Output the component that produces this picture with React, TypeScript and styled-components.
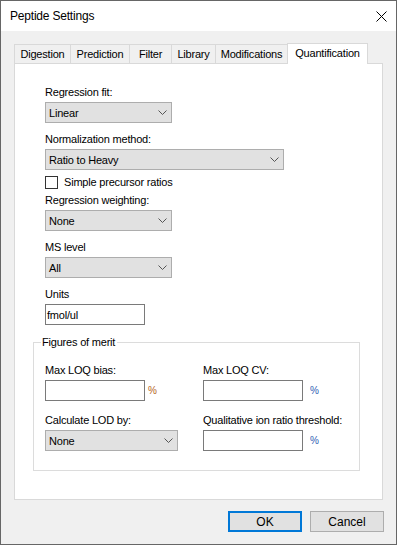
import React from "react";
import styled, { createGlobalStyle } from "styled-components";

const GlobalStyle = createGlobalStyle`
  html, body {
    margin: 0;
    padding: 0;
    background: #ffffff;
  }
  * {
    box-sizing: border-box;
  }
`;

const FONT = `"Liberation Sans", Arial, sans-serif`;

const tabs = [
  { name: "Digestion", width: 57 },
  { name: "Prediction", width: 60 },
  { name: "Filter", width: 43 },
  { name: "Library", width: 45 },
  { name: "Modifications", width: 73 },
  { name: "Quantification", width: 81 },
];

const ACTIVE_TAB = "Quantification";

const Chevron = () => (
  <svg width="9" height="5" viewBox="0 0 9 5">
    <polyline points="0.5,0.5 4.5,4.5 8.5,0.5" fill="none" stroke="#555555" strokeWidth="1" />
  </svg>
);

const CloseIcon = () => (
  <svg width="11" height="11" viewBox="0 0 11 11">
    <line x1="0.5" y1="0.5" x2="10.5" y2="10.5" stroke="#000" strokeWidth="1" />
    <line x1="10.5" y1="0.5" x2="0.5" y2="10.5" stroke="#000" strokeWidth="1" />
  </svg>
);

const App = () => {
  return (
    <>
      <GlobalStyle />
      <Window>
        <TitleBar>
          <Title>Peptide Settings</Title>
          <CloseIcon />
        </TitleBar>
        <Body>
          <TabStrip>
            {tabs.map((tab) => (
              <Tab key={tab.name} $width={tab.width} $active={tab.name === ACTIVE_TAB}>
                {tab.name}
              </Tab>
            ))}
          </TabStrip>
          <Panel>
            <Fields>
              <Field $top={22}>
                <Label>Regression fit:</Label>
                <Combo $width={127}>
                  <span>Linear</span>
                  <Chevron />
                </Combo>
              </Field>
              <Field $top={10}>
                <Label>Normalization method:</Label>
                <Combo $width={239}>
                  <span>Ratio to Heavy</span>
                  <Chevron />
                </Combo>
              </Field>
              <CheckRow>
                <CheckBox />
                <Label>Simple precursor ratios</Label>
              </CheckRow>
              <Field $top={5}>
                <Label>Regression weighting:</Label>
                <Combo $width={127}>
                  <span>None</span>
                  <Chevron />
                </Combo>
              </Field>
              <Field $top={10}>
                <Label>MS level</Label>
                <Combo $width={127}>
                  <span>All</span>
                  <Chevron />
                </Combo>
              </Field>
              <Field $top={10}>
                <Label>Units</Label>
                <TextBox>fmol/ul</TextBox>
              </Field>
            </Fields>
            <Group>
              <Legend>Figures of merit</Legend>
              <GroupGrid>
                <Field>
                  <Label>Max LOQ bias:</Label>
                  <InputRow $gap={3}>
                    <TextBox />
                    <Percent $color="#b5651d">%</Percent>
                  </InputRow>
                </Field>
                <Field>
                  <Label>Max LOQ CV:</Label>
                  <InputRow $gap={7}>
                    <TextBox />
                    <Percent $color="#2f62b4">%</Percent>
                  </InputRow>
                </Field>
                <Field>
                  <Label>Calculate LOD by:</Label>
                  <Combo $width={133}>
                    <span>None</span>
                    <Chevron />
                  </Combo>
                </Field>
                <Field>
                  <Label>Qualitative ion ratio threshold:</Label>
                  <InputRow $gap={7}>
                    <TextBox />
                    <Percent $color="#2f62b4">%</Percent>
                  </InputRow>
                </Field>
              </GroupGrid>
            </Group>
          </Panel>
          <Footer>
            <Button $default>OK</Button>
            <Button>Cancel</Button>
          </Footer>
        </Body>
      </Window>
    </>
  );
};

export default App;

const Window = styled.div`
  width: 397px;
  height: 545px;
  border: 1px solid #666666;
  display: flex;
  flex-direction: column;
  font-family: ${FONT};
  font-size: 11px;
  letter-spacing: -0.2px;
  color: #000000;
`;

const TitleBar = styled.div`
  height: 30px;
  flex-shrink: 0;
  background: #ffffff;
  display: flex;
  align-items: center;
  justify-content: space-between;
  padding: 0 9px 0 9px;
`;

const Title = styled.span`
  font-size: 12px;
  letter-spacing: -0.2px;
`;

const Body = styled.div`
  flex: 1;
  background: #f0f0f0;
  padding: 12px 13px 0 13px;
  display: flex;
  flex-direction: column;
`;

const TabStrip = styled.div`
  height: 20px;
  display: flex;
  align-items: flex-end;
`;

const Tab = styled.div<{ $width: number; $active?: boolean }>`
  position: relative;
  width: ${(p) => p.$width}px;
  height: ${(p) => (p.$active ? 21 : 19)}px;
  margin-right: -1px;
  margin-bottom: ${(p) => (p.$active ? -1 : 0)}px;
  z-index: ${(p) => (p.$active ? 1 : 0)};
  border: 1px solid #d9d9d9;
  border-bottom: none;
  background: ${(p) => (p.$active ? "#ffffff" : "#f0f0f0")};
  display: flex;
  align-items: center;
  justify-content: center;
  padding-bottom: ${(p) => (p.$active ? 2 : 0)}px;
  white-space: nowrap;
`;

const Panel = styled.div`
  height: 437px;
  background: #ffffff;
  border: 1px solid #d9d9d9;
  padding-left: 18px;
  display: flex;
  flex-direction: column;
`;

const Fields = styled.div`
  padding-left: 12px;
  display: flex;
  flex-direction: column;
`;

const Field = styled.div<{ $top?: number }>`
  margin-top: ${(p) => p.$top ?? 0}px;
  display: flex;
  flex-direction: column;
  align-items: flex-start;
  gap: 3px;
`;

const Label = styled.span`
  height: 13px;
  line-height: 13px;
  white-space: nowrap;
`;

const Combo = styled.div<{ $width: number }>`
  width: ${(p) => p.$width}px;
  height: 21px;
  background: #e1e1e1;
  border: 1px solid #adadad;
  display: flex;
  align-items: center;
  justify-content: space-between;
  padding: 0 4px 0 3px;
`;

const TextBox = styled.div`
  width: 100px;
  height: 21px;
  background: #ffffff;
  border: 1px solid #7a7a7a;
  display: flex;
  align-items: center;
  padding-left: 1px;
`;

const CheckRow = styled.div`
  margin-top: 6px;
  display: flex;
  align-items: center;
  gap: 6px;
`;

const CheckBox = styled.div`
  width: 13px;
  height: 13px;
  border: 1px solid #333333;
  background: #ffffff;
`;

const Group = styled.div`
  position: relative;
  margin-top: 17px;
  width: 327px;
  height: 129px;
  border: 1px solid #dcdcdc;
  padding: 21px 0 0 11px;
`;

const Legend = styled.span`
  position: absolute;
  top: -7px;
  left: 7px;
  background: #ffffff;
  padding: 0 2px 0 1px;
  line-height: 13px;
`;

const GroupGrid = styled.div`
  display: grid;
  grid-template-columns: 158px 1fr;
  row-gap: 13px;
`;

const InputRow = styled.div<{ $gap: number }>`
  display: flex;
  align-items: center;
  gap: ${(p) => p.$gap}px;
`;

const Percent = styled.span<{ $color: string }>`
  font-size: 10px;
  color: ${(p) => p.$color};
`;

const Footer = styled.div`
  display: flex;
  justify-content: flex-end;
  gap: 8px;
  padding-top: 11px;
  margin-right: -1px;
`;

const Button = styled.div<{ $default?: boolean }>`
  width: 74px;
  height: 21px;
  background: #e1e1e1;
  border: ${(p) => (p.$default ? "2px solid #0078d7" : "1px solid #adadad")};
  display: flex;
  align-items: center;
  justify-content: center;
  font-size: 12px;
  letter-spacing: 0;
`;
